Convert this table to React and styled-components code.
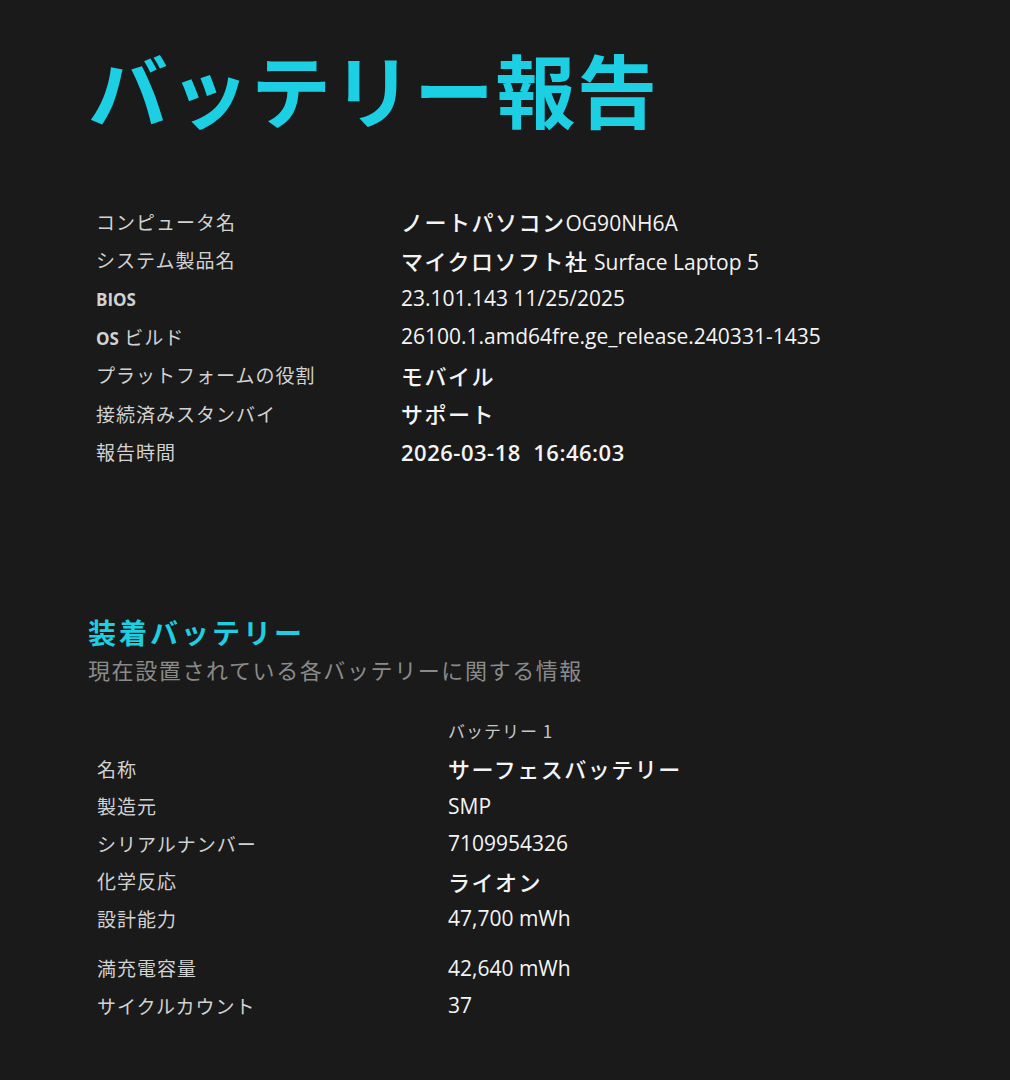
import React from "react";
import styled, { createGlobalStyle } from "styled-components";

const GlobalStyle = createGlobalStyle`
  html, body {
    margin: 0;
    padding: 0;
    background: #1a1a1a;
  }
  body {
    font-family: "Open Sans", "Noto Sans CJK JP", sans-serif;
    color: #f2f2f2;
  }
`;

const Page = styled.div`
  min-height: 1080px;
  padding: 32px 0 0 88px;
  box-sizing: border-box;
  background: #1a1a1a;
`;

const Title = styled.h1`
  margin: 0;
  font-family: "Noto Sans CJK JP", sans-serif;
  font-size: 80px;
  line-height: 110px;
  font-weight: 700;
  color: #1ccfe2;
  letter-spacing: 1.5px;
`;

const InfoTable = styled.div`
  display: grid;
  grid-template-columns: 305px auto;
  grid-auto-rows: 38.4px;
  align-items: center;
  margin: 60px 0 0 8px;
`;

const Label = styled.div`
  font-family: "Noto Sans CJK JP", sans-serif;
  font-size: 19px;
  letter-spacing: 1px;
  color: #d2d2d2;
  white-space: nowrap;
`;

const LatinLabel = styled.span`
  font-family: "Open Sans", sans-serif;
  font-weight: 700;
  font-size: 17px;
  letter-spacing: 0;
`;

const Value = styled.div`
  font-size: 21px;
  color: #f4f4f4;
  white-space: nowrap;
`;

const Jp = styled.span`
  font-family: "Noto Sans CJK JP", sans-serif;
  font-weight: 500;
  font-size: 22px;
  letter-spacing: 1.5px;
`;

const Stamp = styled.span`
  font-size: 22px;
  font-weight: 600;
  letter-spacing: 0.5px;
`;

const Section = styled.section`
  margin-top: 142px;
`;

const SectionTitle = styled.h2`
  margin: 0;
  font-family: "Noto Sans CJK JP", sans-serif;
  font-size: 28px;
  line-height: 38px;
  font-weight: 700;
  letter-spacing: 3px;
  color: #1ccfe2;
`;

const SectionSub = styled.div`
  font-family: "Noto Sans CJK JP", sans-serif;
  font-size: 22px;
  line-height: 36px;
  letter-spacing: 1.6px;
  color: #8a8a8a;
`;

const BatteryTable = styled.div`
  display: grid;
  grid-template-columns: 351px auto;
  margin: 24px 0 0 9px;
`;

const Cell = styled.div`
  height: ${(p) => p.$h || 37.5}px;
  margin-bottom: ${(p) => p.$gap || 0}px;
  display: flex;
  align-items: center;
  white-space: nowrap;
`;

const Header = styled.span`
  font-family: "Noto Sans CJK JP", sans-serif;
  font-size: 17px;
  letter-spacing: 1px;
  color: #c8c8c8;
`;

const info = [
  ["コンピュータ名", <><Jp>ノートパソコン</Jp>OG90NH6A</>],
  ["システム製品名", <><Jp>マイクロソフト社</Jp> Surface Laptop 5</>],
  [<LatinLabel>BIOS</LatinLabel>, "23.101.143 11/25/2025"],
  [<><LatinLabel>OS</LatinLabel> ビルド</>, "26100.1.amd64fre.ge_release.240331-1435"],
  ["プラットフォームの役割", <Jp>モバイル</Jp>],
  ["接続済みスタンバイ", <Jp>サポート</Jp>],
  ["報告時間", <Stamp>2026-03-18&nbsp;&nbsp;16:46:03</Stamp>],
];

const battery = [
  ["名称", <Jp>サーフェスバッテリー</Jp>],
  ["製造元", "SMP"],
  ["シリアルナンバー", "7109954326"],
  ["化学反応", <Jp>ライオン</Jp>],
  ["設計能力", "47,700 mWh", 12],
  ["満充電容量", "42,640 mWh"],
  ["サイクルカウント", "37"],
];

export default function App() {
  return (
    <>
      <GlobalStyle />
      <Page>
        <Title>バッテリー報告</Title>
        <InfoTable>
          {info.map(([k, v], i) => (
            <React.Fragment key={i}>
              <Label>{k}</Label>
              <Value>{v}</Value>
            </React.Fragment>
          ))}
        </InfoTable>
        <Section>
          <SectionTitle>装着バッテリー</SectionTitle>
          <SectionSub>現在設置されている各バッテリーに関する情報</SectionSub>
          <BatteryTable>
            <Cell $h={39} />
            <Cell $h={39}>
              <Header>バッテリー 1</Header>
            </Cell>
            {battery.map(([k, v, gap], i) => (
              <React.Fragment key={i}>
                <Cell $gap={gap}>
                  <Label>{k}</Label>
                </Cell>
                <Cell $gap={gap}>
                  <Value>{v}</Value>
                </Cell>
              </React.Fragment>
            ))}
          </BatteryTable>
        </Section>
      </Page>
    </>
  );
}
